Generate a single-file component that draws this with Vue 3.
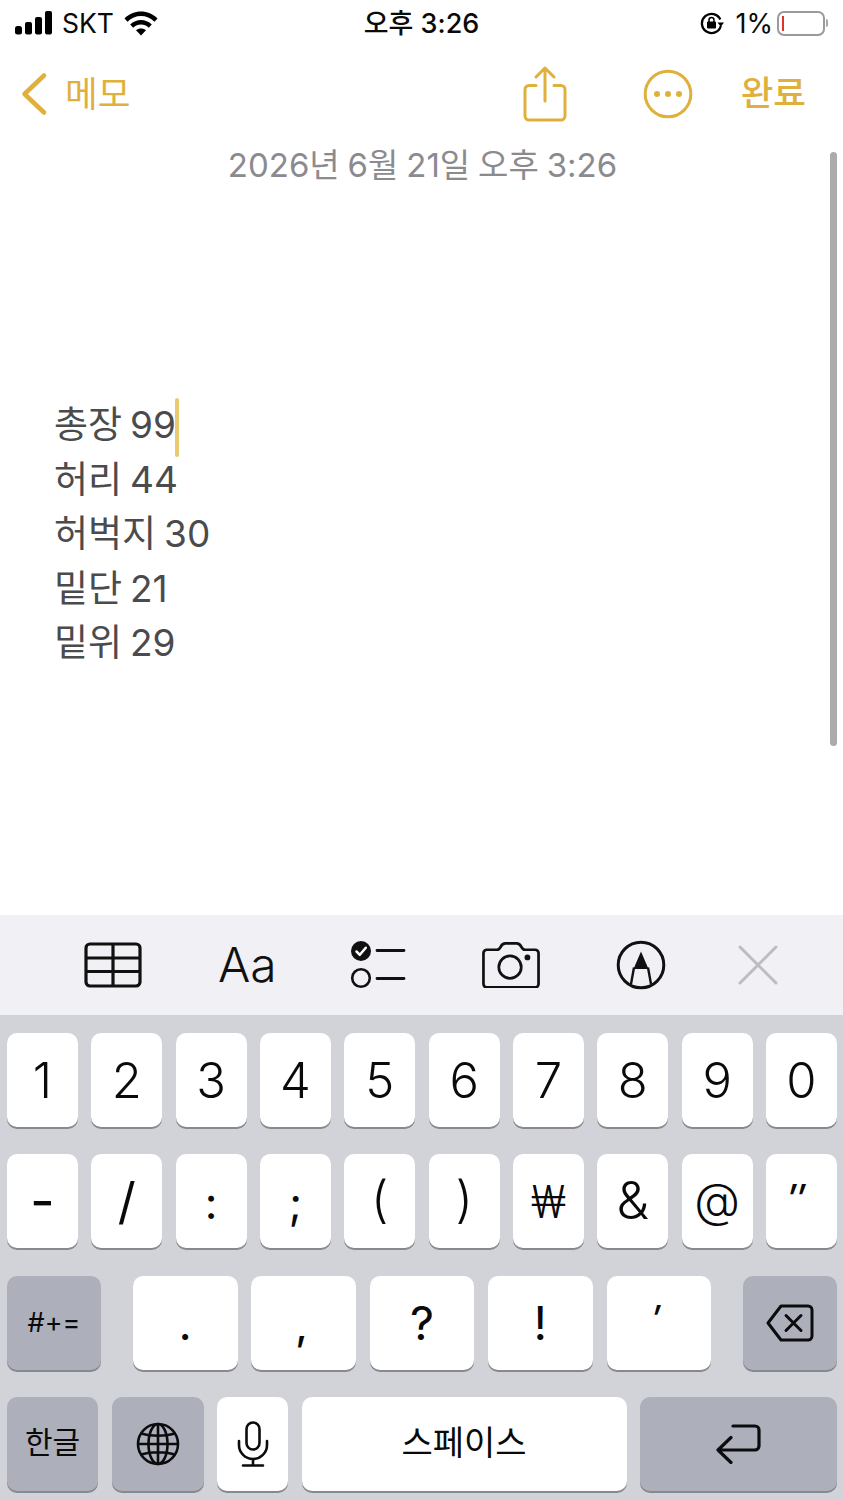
<script setup>
const row1 = ['1','2','3','4','5','6','7','8','9','0']
const row2 = [
  { t: '-', c: 'g-dash' }, { t: '/', c: 'g-slash' }, { t: ':', c: 'g-colon' }, { t: ';', c: 'g-colon' }, { t: '(', c: 'g-paren' },
  { t: ')', c: 'g-paren' }, { t: '₩', c: 'g-won' }, { t: '&', c: 'g-amp' }, { t: '@', c: 'g-at' }, { t: '″', c: 'g-dq' }
]
const row3 = [
  { t: '.', c: 'g-period' }, { t: ',', c: 'g-comma' }, { t: '?', c: 'g-q' }, { t: '!', c: 'g-q' }, { t: '′', c: 'g-sq' }
]
const lines = ['허리 44', '허벅지 30', '밑단 21', '밑위 29']
</script>

<template>
  <div class="screen">
    <header class="status">
      <div class="st-left">
        <svg class="bars" width="37" height="24" viewBox="0 0 37 24" fill="#000">
          <rect x="0" y="15" width="7" height="8.500" rx="2.500" />
          <rect x="10" y="11" width="7" height="12.500" rx="2" />
          <rect x="20" y="6" width="7" height="17.500" rx="2" />
          <rect x="30" y="0" width="7" height="23.500" rx="2" />
        </svg>
        <span class="carrier">SKT</span>
        <svg class="wifi" width="34" height="25" viewBox="0 0 34 25" fill="#000">
          <path d="M0.500 7.500C9.500 -1.800 24.500 -1.800 33.500 7.500L30.500 10.800C23 3.200 11 3.200 3.500 10.800Z" />
          <path d="M6.200 13.500C12.200 7.500 21.800 7.500 27.800 13.500L24.800 16.700C20.300 12.300 13.700 12.300 9.200 16.700Z" />
          <path d="M12 19.300C14.800 16.800 19.200 16.800 22 19.300L17 24.500Z" />
        </svg>
      </div>
      <div class="st-time">오후 3:26</div>
      <div class="st-right">
        <svg class="rot" width="24" height="24" viewBox="0 0 24 24" fill="none">
          <path d="M20.300 8.500A9.600 9.600 0 1 0 20.800 15" stroke="#000" stroke-width="2.300" />
          <path d="M17.500 11.500h6.500l-3.200 4.300z" fill="#000" />
          <rect x="7" y="10.500" width="9" height="7" rx="1" fill="#000" />
          <path d="M9 11V9a2.500 2.500 0 0 1 5 0v2" stroke="#000" stroke-width="1.500" />
        </svg>
        <span class="pct">1%</span>
        <div class="battery"><i class="level"></i></div>
        <i class="nub"></i>
      </div>
    </header>

    <nav class="nav">
      <svg class="chev" width="28" height="44" viewBox="0 0 28 44" fill="none">
        <path d="M24 3.500L4.500 22L24 40.500" stroke="#dfb13c" stroke-width="4.500" stroke-linecap="round" stroke-linejoin="round" />
      </svg>
      <span class="back">메모</span>
      <span class="spacer"></span>
      <svg class="share" width="44" height="56" viewBox="0 0 44 56" fill="none" stroke="#dfb13c" stroke-width="3" stroke-linecap="round" stroke-linejoin="round">
        <path d="M13 19.500H6a4 4 0 0 0-4 4V50a4 4 0 0 0 4 4h32a4 4 0 0 0 4-4V23.500a4 4 0 0 0-4-4h-7" />
        <path d="M22 35V2M13 11l9-9 9 9" />
      </svg>
      <svg class="more" width="50" height="50" viewBox="0 0 50 50" fill="none">
        <circle cx="25" cy="25" r="22.800" stroke="#dfb13c" stroke-width="3" />
        <circle cx="14" cy="25" r="3" fill="#dfb13c" />
        <circle cx="25" cy="25" r="3" fill="#dfb13c" />
        <circle cx="36" cy="25" r="3" fill="#dfb13c" />
      </svg>
      <span class="done">완료</span>
    </nav>

    <main class="note">
      <div class="date">2026년 6월 21일 오후 3:26</div>
      <div class="body">
        <div class="line">총장 99<i class="caret"></i></div>
        <div v-for="l in lines" :key="l" class="line">{{ l }}</div>
      </div>
      <i class="scroll"></i>
    </main>

    <section class="tools">
      <svg class="t-table" width="58" height="46" viewBox="0 0 58 46" fill="none" stroke="#111" stroke-width="3.200">
        <rect x="2" y="2" width="54" height="42" rx="4" />
        <path d="M2 16h54M2 29.500h54M29 2v42" />
      </svg>
      <span class="t-aa">Aa</span>
      <svg class="t-check" width="56" height="50" viewBox="0 0 56 50" fill="none">
        <circle cx="11" cy="11" r="10" fill="#111" />
        <path d="M6.500 11.500l3.300 3.300 6-7" stroke="#fff" stroke-width="2.500" stroke-linecap="round" stroke-linejoin="round" />
        <circle cx="11" cy="38" r="8.800" stroke="#111" stroke-width="2.600" />
        <path d="M27 10.500h27M27 38.500h27" stroke="#111" stroke-width="2.800" stroke-linecap="round" />
      </svg>
      <svg class="t-cam" width="58" height="46.400" viewBox="0 0 60 48" fill="none">
        <path d="M5 8h10.500c2 0 2.800-1 3.800-3 1-2 2-3.500 5-3.500h11.400c3 0 4 1.500 5 3.500 1 2 1.800 3 3.800 3H55a3.500 3.500 0 0 1 3.500 3.500v32A3.500 3.500 0 0 1 55 47H5a3.500 3.500 0 0 1-3.500-3.500v-32A3.500 3.500 0 0 1 5 8z" stroke="#111" stroke-width="2.800" />
        <circle cx="29" cy="26" r="11.600" stroke="#111" stroke-width="2.800" />
        <circle cx="47" cy="16" r="3" fill="#111" />
      </svg>
      <svg class="t-pen" width="50" height="50" viewBox="0 0 50 50" fill="none">
        <circle cx="25" cy="25" r="22.800" stroke="#111" stroke-width="3" />
        <path d="M25 11.500L32.500 29H17.500Z" fill="#111" />
        <path d="M18 27.500L15 44M32 27.500L35 44" stroke="#111" stroke-width="2.400" />
      </svg>
      <svg class="t-x" width="40" height="40" viewBox="0 0 40 40" fill="none">
        <path d="M2 2L38 38M38 2L2 38" stroke="#bdbdc1" stroke-width="3" stroke-linecap="round" />
      </svg>
    </section>

    <section class="kb">
      <div class="row">
        <button v-for="k in row1" :key="k" class="key num digit">{{ k }}</button>
      </div>
      <div class="row">
        <button v-for="k in row2" :key="k.t" class="key num" :class="k.c">{{ k.t }}</button>
      </div>
      <div class="row row3">
        <button class="key dark sym">#+=</button>
        <div class="punct">
          <button v-for="k in row3" :key="k.t" class="key num" :class="k.c">{{ k.t }}</button>
        </div>
        <button class="key dark del" aria-label="delete">
          <svg width="48" height="38" viewBox="0 0 48 38" fill="none" stroke="#0c0c0e" stroke-width="3" stroke-linejoin="round" stroke-linecap="round">
            <path d="M15 2h27a4 4 0 0 1 4 4v26a4 4 0 0 1-4 4H15L2 19Z" />
            <path d="M20 11.500L35 26.500M35 11.500L20 26.500" />
          </svg>
        </button>
      </div>
      <div class="row row4">
        <button class="key dark hangul">한글</button>
        <button class="key dark globe" aria-label="globe">
          <svg width="44" height="44" viewBox="0 0 44 44" fill="none" stroke="#0c0c0e" stroke-width="2.600">
            <circle cx="22" cy="22" r="20" />
            <ellipse cx="22" cy="22" rx="9.500" ry="20" />
            <path d="M22 2v40M2 22h40M5 11.500c10 3 24 3 34 0M5 32.500c10-3 24-3 34 0" />
          </svg>
        </button>
        <button class="key mic" aria-label="mic">
          <svg width="32" height="46" viewBox="0 0 32 46" fill="none" stroke="#0c0c0e" stroke-width="2.600" stroke-linecap="round">
            <rect x="9.500" y="1.500" width="13" height="27" rx="6.500" />
            <path d="M2 20v4a14 14 0 0 0 28 0v-4M16 38v6.500M6 44.500h20" />
          </svg>
        </button>
        <button class="key space">스페이스</button>
        <button class="key dark ret" aria-label="return">
          <svg width="46" height="40" viewBox="0 0 46 40" fill="none" stroke="#0c0c0e" stroke-width="3.200" stroke-linecap="round" stroke-linejoin="round">
            <path d="M17 2h22a4 4 0 0 1 4 4v16a4 4 0 0 1-4 4H2M15 13.500L2 26l13 12.500" />
          </svg>
        </button>
      </div>
    </section>
  </div>
</template>

<style scoped>
.screen {
  width: 843px;
  height: 1500px;
  display: flex;
  flex-direction: column;
  background: #fff;
  font-family: Inter, "Noto Sans CJK KR", sans-serif;
  overflow: hidden;
}
.status {
  height: 46px;
  flex: none;
  display: grid;
  grid-template-columns: 1fr auto 1fr;
  align-items: center;
  color: #0a0a0a;
}
.st-left { display: flex; align-items: center; padding-left: 15px; }
.carrier { font-size: 26.500px; margin-left: 10px; line-height: 1; }
.wifi { margin-left: 10px; }
.st-time { font-size: 27px; font-weight: 500; line-height: 1; }
.st-right { display: flex; align-items: center; justify-content: flex-end; padding-right: 15px; }
.pct { font-size: 27px; margin-left: 12px; line-height: 1; }
.battery {
  width: 48px;
  height: 25px;
  margin-left: 4px;
  box-sizing: border-box;
  border: 2px solid #9a9a9c;
  border-radius: 7px;
  padding: 3px;
  display: flex;
}
.level { width: 2px; background: #e0332c; }
.nub { width: 2px; height: 8px; margin-left: 1px; background: #a5a5a8; border-radius: 0 2px 2px 0; }

.nav {
  height: 56px;
  margin-top: 20px;
  flex: none;
  display: flex;
  align-items: center;
  padding: 0 37px 0 20px;
  color: #dfb13c;
}
.back { font-size: 35.500px; margin-left: 17px; line-height: 1; padding-top: 2px; }
.spacer { flex: 1; }
.more { margin-left: 76px; }
.done { font-size: 35.500px; font-weight: 500; margin-left: 48px; line-height: 1; }

.note { flex: 1; position: relative; }
.date {
  margin-top: 20px;
  padding-left: 2px;
  text-align: center;
  font-size: 33px;
  line-height: 46px;
  word-spacing: -1.400px;
  color: #8b8b8f;
}
.body {
  margin-top: 210px;
  padding-left: 54px;
  color: #4b4b4d;
  font-size: 37px;
  line-height: 54.500px;
  word-spacing: -2.500px;
}
.line { position: relative; width: fit-content; white-space: nowrap; }
.caret {
  position: absolute;
  right: -3px;
  top: 0;
  width: 4px;
  height: 59px;
  border-radius: 2px;
  background: #e9ca70;
}
.scroll {
  position: absolute;
  left: 830px;
  top: 30px;
  width: 7px;
  height: 594px;
  border-radius: 4px;
  background: #ababad;
}

.tools {
  height: 100px;
  flex: none;
  background: #f1f1f5;
  display: flex;
  align-items: center;
  padding-left: 84px;
  color: #111;
}
.t-aa { font-size: 48px; font-weight: 300; margin-left: 76px; line-height: 1; width: 58px; }
.t-check { margin-left: 74px; }
.t-cam { margin-left: 76px; }
.t-pen { margin-left: 76px; }
.t-x { margin-left: 72px; }

.kb {
  height: 485px;
  flex: none;
  box-sizing: border-box;
  background: #d1d3d9;
  padding: 18px 6px 8px 7px;
  display: flex;
  flex-direction: column;
  gap: 27.300px;
}
.row { display: flex; justify-content: space-between; height: 94px; }
.key {
  appearance: none;
  border: none;
  margin: 0;
  padding: 0;
  width: 71px;
  height: 94px;
  border-radius: 10px;
  background: #fff;
  box-shadow: 0 2px 0 #88898e;
  color: #0a0a0a;
  font-family: inherit;
  display: flex;
  align-items: center;
  justify-content: center;
}
.dark { background: #adb0bb; }
.num { font-size: 47px; font-weight: 350; line-height: 1; }
.digit { font-size: 49px; }

.g-dash { font-size: 54px; font-weight: 400; }
.g-slash { font-size: 50px; font-weight: 400; }
.g-colon { font-size: 44px; font-weight: 400; padding-top: 4px; }
.g-paren { font-size: 50px; padding-bottom: 4px; }
.g-won { font-family: Roboto, sans-serif; font-size: 46px; font-weight: 300; padding-top: 2px; }
.g-amp { font-size: 52px; }
.g-at { font-size: 47px; padding-bottom: 4px; }
.g-dq { font-size: 38px; font-weight: 500; padding-bottom: 6px; padding-right: 11px; font-style: italic; }
.g-period { font-size: 46px; font-weight: 400; }
.g-comma { font-size: 40px; font-weight: 500; padding-right: 4px; padding-top: 6px; }
.g-q { font-size: 47px; font-weight: 400; }
.g-sq { font-size: 36px; font-weight: 500; padding-bottom: 10px; padding-right: 6px; font-style: italic; }

.punct { display: flex; justify-content: space-between; width: 578px; }
.punct .key { width: 104.500px; }
.sym { width: 94px; font-size: 27px; }
.del { width: 94px; }
.hangul { width: 91px; font-size: 30px; padding-bottom: 8px; }
.globe { width: 92px; }
.space { width: 325px; font-size: 34px; padding-bottom: 6px; }
.ret { width: 197px; }
</style>
